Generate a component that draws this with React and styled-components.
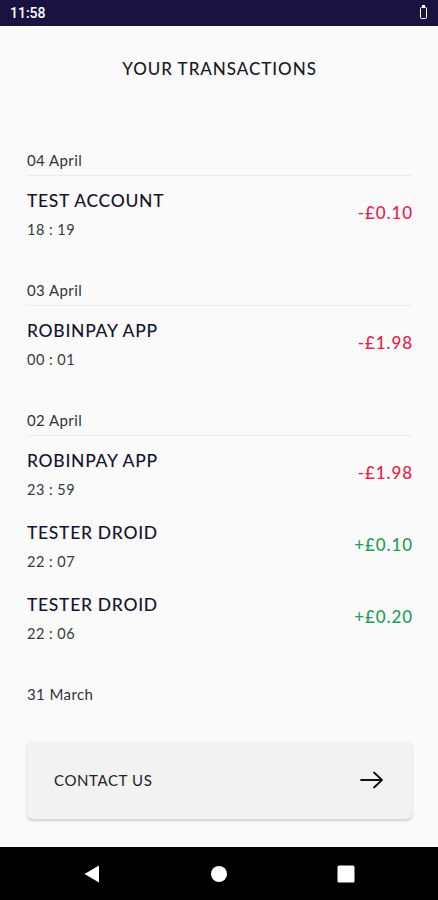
import React from "react";
import styled, { createGlobalStyle } from "styled-components";

const Global = createGlobalStyle`
  html, body { margin: 0; padding: 0; background: #fafafa; }
  body { font-family: Lato, "Noto Sans", sans-serif; }
`;

const Screen = styled.div`
  width: 438px;
  height: 900px;
  display: flex;
  flex-direction: column;
  background: #fafafa;
  overflow: hidden;
`;

const StatusBar = styled.div`
  height: 26px;
  background: #1a1342;
  display: flex;
  align-items: center;
  justify-content: space-between;
  padding: 0 8px 0 10px;
  color: #fff;
  font-family: Roboto, sans-serif;
  font-size: 14px;
  font-weight: 500;
  flex-shrink: 0;
`;

const Battery = styled.div`
  width: 5px;
  height: 10px;
  border: 1.5px solid #fff;
  border-radius: 1.5px;
  margin-right: 3px;
  position: relative;
  &::before {
    content: "";
    position: absolute;
    top: -3.5px;
    left: 1px;
    width: 3px;
    height: 2px;
    background: #fff;
  }
`;

const Content = styled.div`
  flex: 1;
  display: flex;
  flex-direction: column;
  padding: 0 26px 0 27px;
`;

const Title = styled.h1`
  margin: 0;
  height: 84px;
  display: flex;
  align-items: center;
  justify-content: center;
  font-size: 17px;
  font-weight: 500;
  letter-spacing: 0.95px;
  color: #1c1c28;
`;

const List = styled.div`
  display: flex;
  flex-direction: column;
  gap: 32px;
  padding-top: 40px;
`;

const Group = styled.section`
  display: flex;
  flex-direction: column;
`;

const DateLabel = styled.div`
  font-size: 15px;
  line-height: 20px;
  letter-spacing: 0.4px;
  color: #333338;
  padding-bottom: 5px;
  border-bottom: ${(p) => (p.$last ? "none" : "1px solid #ececec")};
`;

const Row = styled.div`
  height: 72px;
  display: flex;
  align-items: center;
  justify-content: space-between;
`;

const Info = styled.div`
  display: flex;
  flex-direction: column;
  gap: 10px;
  padding-top: 6px;
`;

const Name = styled.div`
  font-size: 17.5px;
  line-height: 20px;
  font-weight: 500;
  letter-spacing: 0.7px;
  color: #16152e;
`;

const Time = styled.div`
  font-size: 14.5px;
  line-height: 18px;
  color: #38383d;
  letter-spacing: 0.5px;
`;

const Amount = styled.div`
  font-size: 17px;
  font-weight: 500;
  letter-spacing: 0.9px;
  margin-right: -1px;
  color: ${(p) => (p.$positive ? "#1f9e57" : "#ea1c4b")};
`;

const ContactCard = styled.button`
  margin-top: auto;
  margin-bottom: 28px;
  height: 78px;
  width: 100%;
  border: none;
  border-radius: 6px;
  background: #f2f2f2;
  box-shadow: 0 2px 3px rgba(0, 0, 0, 0.18);
  display: flex;
  align-items: center;
  justify-content: space-between;
  padding: 0 28px 0 27px;
  font-family: inherit;
  font-size: 15px;
  letter-spacing: 0.6px;
  color: #222228;
  cursor: pointer;
`;

const NavBar = styled.div`
  height: 53px;
  background: #000;
  display: flex;
  align-items: center;
  justify-content: flex-start;
  gap: 87px;
  padding-left: 72px;
  flex-shrink: 0;
`;

const NavSlot = styled.div`
  width: 40px;
  display: flex;
  justify-content: center;
  align-items: center;
`;

const groups = [
  { date: "04 April", items: [{ name: "TEST ACCOUNT", time: "18 : 19", amount: "-£0.10" }] },
  { date: "03 April", items: [{ name: "ROBINPAY APP", time: "00 : 01", amount: "-£1.98" }] },
  {
    date: "02 April",
    items: [
      { name: "ROBINPAY APP", time: "23 : 59", amount: "-£1.98" },
      { name: "TESTER DROID", time: "22 : 07", amount: "+£0.10", positive: true },
      { name: "TESTER DROID", time: "22 : 06", amount: "+£0.20", positive: true },
    ],
  },
  { date: "31 March", items: [], last: true },
];

export default function App() {
  return (
    <>
      <Global />
      <Screen>
        <StatusBar>
          <span>11:58</span>
          <Battery />
        </StatusBar>
        <Content>
          <Title>YOUR TRANSACTIONS</Title>
          <List>
            {groups.map((g) => (
              <Group key={g.date}>
                <DateLabel $last={g.last}>{g.date}</DateLabel>
                {g.items.map((t, i) => (
                  <Row key={i}>
                    <Info>
                      <Name>{t.name}</Name>
                      <Time>{t.time}</Time>
                    </Info>
                    <Amount $positive={t.positive}>{t.amount}</Amount>
                  </Row>
                ))}
              </Group>
            ))}
          </List>
          <ContactCard>
            <span>CONTACT US</span>
            <svg width="24" height="18" viewBox="0 0 24 18" fill="none" stroke="#111" strokeWidth="1.8" strokeLinecap="round" strokeLinejoin="round">
              <path d="M1 9h21M14 1.5L22 9l-8 7.5" />
            </svg>
          </ContactCard>
        </Content>
        <NavBar>
          <NavSlot>
            <svg width="18" height="18" viewBox="0 0 18 18">
              <path d="M16 0.5v17L1.5 9z" fill="#fff" />
            </svg>
          </NavSlot>
          <NavSlot>
            <svg width="18" height="18" viewBox="0 0 18 18">
              <circle cx="9" cy="9" r="8" fill="#fff" />
            </svg>
          </NavSlot>
          <NavSlot>
            <svg width="18" height="18" viewBox="0 0 18 18">
              <rect x="0.5" y="0.5" width="17" height="17" rx="1.5" fill="#fff" />
            </svg>
          </NavSlot>
        </NavBar>
      </Screen>
    </>
  );
}
